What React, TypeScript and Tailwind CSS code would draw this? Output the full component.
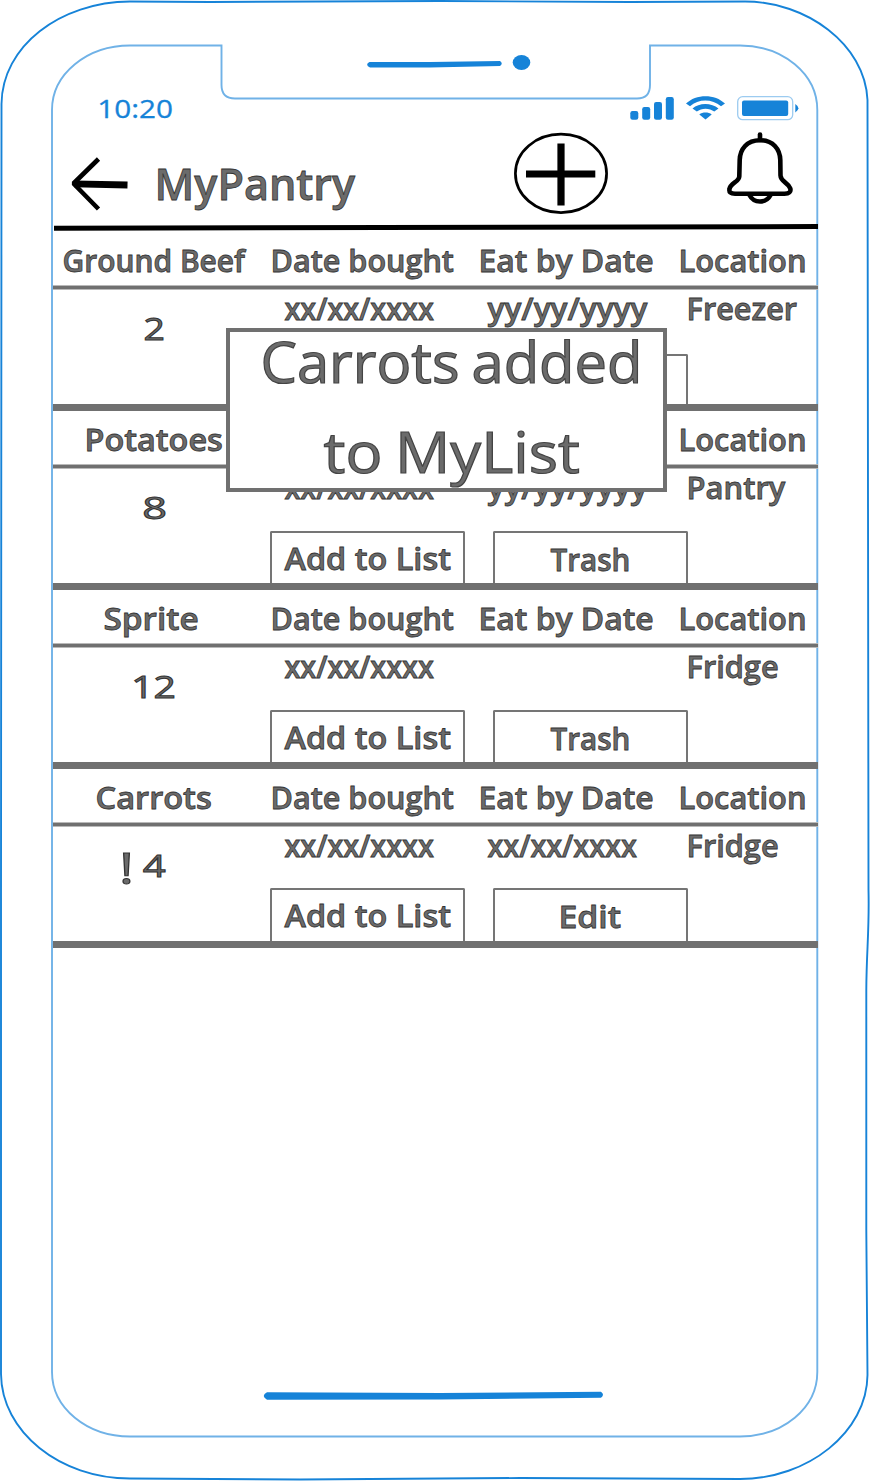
import { useLayoutEffect, useRef } from "react";

type InkTextProps = { text: string; width: number; className?: string };

/** Text whose visible glyphs are stretched to fill exactly the given width. */
function InkText({ text, width, className = "" }: InkTextProps) {
  const ref = useRef<HTMLSpanElement>(null);
  useLayoutEffect(() => {
    const el = ref.current;
    const ctx = document.createElement("canvas").getContext("2d");
    if (!el || !ctx) return;
    const cs = getComputedStyle(el);
    ctx.font = `${cs.fontWeight} ${cs.fontSize} ${cs.fontFamily}`;
    ctx.wordSpacing = cs.wordSpacing;
    const m = ctx.measureText(text);
    const ink = m.actualBoundingBoxLeft + m.actualBoundingBoxRight;
    el.style.transform = `scaleX(${(width - 1) / ink}) translateX(${m.actualBoundingBoxLeft + 0.5}px)`;
  }, [text, width]);
  return (
    <span className={`block whitespace-nowrap ${className}`} style={{ width }}>
      <span ref={ref} className="inline-block origin-left">
        {text}
      </span>
    </span>
  );
}

type Label = [string, number];
type Item = {
  name: Label;
  nameShift: string;
  qty: Label;
  alert?: boolean;
  bought: Label;
  eatBy?: Label;
  place: Label;
  action: Label;
  buttons: string;
};

const XDATE: Label = ["xx/xx/xxxx", 150];
const YDATE: Label = ["yy/yy/yyyy", 161];

const items: Item[] = [
  { name: ["Ground Beef", 184], nameShift: "pl-px", qty: ["2", 20], bought: XDATE, eatBy: YDATE, place: ["Freezer", 110], action: ["Trash", 79], buttons: "h-[50px]" },
  { name: ["Potatoes", 137], nameShift: "pl-px", qty: ["8", 23], bought: XDATE, eatBy: YDATE, place: ["Pantry", 98], action: ["Trash", 79], buttons: "h-[52px]" },
  { name: ["Sprite", 94], nameShift: "pr-[6px]", qty: ["12", 42], bought: XDATE, place: ["Fridge", 90], action: ["Trash", 79], buttons: "h-[52px]" },
  { name: ["Carrots", 116], nameShift: "", qty: ["4", 24], alert: true, bought: XDATE, eatBy: XDATE, place: ["Fridge", 90], action: ["Edit", 61], buttons: "h-[53px]" },
];

function CardButton({ label, width, className }: { label: string; width: number; className: string }) {
  return (
    <button
      className={`flex w-[195px] justify-center rounded-t-[2px] border-2 border-b-0 border-[#757575] ${className}`}
    >
      <InkText text={label} width={width} />
    </button>
  );
}

function PantryRow({ item }: { item: Item }) {
  return (
    <section className="h-[179px] border-b-[7px] border-[#707070]">
      <div className="grid h-[53px] grid-cols-[219px_208px_200px_137px] pt-px leading-[53px]">
        <div className={`flex w-[202px] justify-center ${item.nameShift}`}>
          <InkText text={item.name[0]} width={item.name[1]} />
        </div>
        <InkText text="Date bought" width={182} />
        <InkText text="Eat by Date" width={173} />
        <InkText text="Location" width={125} />
      </div>
      <div className="h-[5px] border-y border-[#b9b9b9] bg-[#707070]" />
      <div className="flex h-[114px]">
        <div className="flex w-[217px] items-start pt-3 leading-[52px]">
          <div className="flex w-[202px] justify-center font-medium [-webkit-text-stroke:1px_#333]">
            {item.alert && (
              <InkText text="!" width={9} className="-ml-[20px] mr-[11px] pt-0.5 text-[44px]" />
            )}
            <InkText text={item.qty[0]} width={item.qty[1]} />
          </div>
        </div>
        <div className="flex flex-1 flex-col justify-between">
          <div className="flex h-10 pl-[14px] leading-[35px]">
            <div className="w-[203px]">
              <InkText text={item.bought[0]} width={item.bought[1]} />
            </div>
            <div className="w-[201px]">
              {item.eatBy && <InkText text={item.eatBy[0]} width={item.eatBy[1]} />}
            </div>
            <InkText text={item.place[0]} width={item.place[1]} />
          </div>
          <div className="flex items-end gap-7">
            <CardButton label="Add to List" width={167} className={`pr-[5px] leading-[49px] ${item.buttons}`} />
            <CardButton label={item.action[0]} width={item.action[1]} className={`pr-[2px] leading-[51px] ${item.buttons}`} />
          </div>
        </div>
      </div>
    </section>
  );
}

function PhoneFrame() {
  return (
    <svg className="pointer-events-none absolute inset-0" width="870" height="1481" viewBox="0 0 870 1481" fill="none">
      <path
        d="M1 898V1374C1.500 1432 60 1478.500 130 1478.500L300 1479.500L520 1478L740 1479C808 1479 867 1432 867.500 1375L866.300 1230V990C866.500 950 869.500 930 868.500 890L867.500 100C865 44 806 1.500 745 1.500L630 2L440 1L210 2L130 1.500C60 2 2 46 1.500 104Z"
        stroke="#1683d8"
        strokeWidth="1.900"
      />
      <path
        d="M221.500 45.500H130C87 45.500 52 74 52 110V1372C52 1408 87 1436.500 130 1436.500H740C783 1436.500 817.300 1408 817.300 1372V110C817.300 74 783 45.500 740 45.500H650V85Q650 98.500 637 98.500H235Q221.500 98.500 221.500 85V44.500"
        stroke="#70b2e7"
        strokeWidth="1.900"
      />
      <path d="M369.500 61.900L430 62L500 61Q503.500 63.500 500 66L430 67.500L370 67.500Q364.500 64.500 369.500 61.900Z" fill="#1683d8" />
      <ellipse cx="521.500" cy="62.500" rx="8.800" ry="7.500" fill="#1683d8" />
      <path d="M267 1392.300L440 1393L601 1391.700Q605 1394.800 601 1397.800L440 1399.500L267 1399.700Q260.500 1396 267 1392.300Z" fill="#1683d8" />
    </svg>
  );
}

function StatusIcons() {
  return (
    <svg width="170" height="26" viewBox="630 95 170 26" fill="#1683d8">
      <rect x="630.300" y="111" width="8" height="8.700" rx="2.200" />
      <rect x="642.200" y="107" width="8" height="12.700" rx="2.200" />
      <rect x="654" y="102" width="8" height="17.700" rx="2.200" />
      <rect x="665.800" y="97" width="8" height="22.700" rx="2.200" />
      <path d="M686 103.500C696 93.700 715 93.700 725 103.500L721 106.300C712 98.500 698.500 98.500 690 106.300Z" />
      <path d="M692.500 108.500C699 102.500 711.500 102.500 718.500 108.500L714.300 111.600C709.500 107.700 701.500 107.700 696.800 111.600Z" />
      <path d="M699.300 114.400C702.500 111.900 708.500 111.900 711.700 114.400L705.500 119.500Z" />
      <rect x="737.700" y="96.700" width="55" height="23" rx="5" fill="none" stroke="#9ccbf0" strokeWidth="1.300" />
      <rect x="742" y="100.500" width="46.200" height="15.600" rx="2" />
      <path d="M795.300 104Q801.500 108.200 795.300 112.500Z" />
    </svg>
  );
}

function BackArrow() {
  return (
    <svg width="60" height="56" viewBox="70 156 60 56" fill="none" stroke="#000">
      <path d="M74 183.800L127.500 185" strokeWidth="6.800" />
      <path d="M98.500 159L73.500 183.500L98.500 209" strokeWidth="4.600" strokeLinejoin="bevel" />
    </svg>
  );
}

function AddIcon() {
  return (
    <svg width="96" height="84" viewBox="513 132 96 84" fill="none" stroke="#000">
      <ellipse cx="561" cy="173.400" rx="45.600" ry="39.200" strokeWidth="2.700" />
      <path d="M561 143.500V205.500M526 174H595.300" strokeWidth="7.200" />
    </svg>
  );
}

function BellIcon() {
  return (
    <svg width="70" height="76" viewBox="725 130 70 76" fill="none" stroke="#000" strokeLinecap="round" strokeLinejoin="round">
      <path d="M760 134.500V140" strokeWidth="4.600" />
      <path
        d="M760 140.200C747 140.200 740 149 739.700 160L739.300 176C739.500 182 730.500 182.500 729.500 189Q728.500 193.700 735 193.700H784.500Q791.500 193.700 790.300 188.500C788 182 780.700 182 780.500 175.500L780.300 160C780 149 773 140.200 760 140.200Z"
        strokeWidth="4.600"
      />
      <path d="M749 194.500C754 203.900 766 203.900 771 194.500" strokeWidth="4.400" />
    </svg>
  );
}

export default function App() {
  return (
    <div className="relative h-[1481px] w-[870px] overflow-hidden bg-white font-['Open_Sans',sans-serif] text-[31.5px] font-semibold text-[#6b6b6b] [-webkit-text-stroke:0.8px_#333]">
      <PhoneFrame />
      <main className="relative ml-[53px] w-[765px] pt-[95px]">
        <div className="flex h-[35px] items-start justify-between pl-[46px] pr-[18px]">
          <InkText
            text="10:20"
            width={74}
            className="text-[25px] font-normal leading-[27px] text-[#1683d8] [-webkit-text-stroke:0.3px_#1683d8]"
          />
          <StatusIcons />
        </div>
        <header className="flex h-[102px] items-start">
          <div className="ml-[17px] pt-[26px]">
            <BackArrow />
          </div>
          <InkText text="MyPantry" width={198} className="ml-[28px] mt-[23px] text-[44px] leading-[60px]" />
          <div className="ml-[157px] pt-[2px]">
            <AddIcon />
          </div>
          <div className="ml-[116px]">
            <BellIcon />
          </div>
        </header>
        <svg className="-mt-[8px] block" width="765" height="8" viewBox="0 0 765 8">
          <path d="M1 1.800L765 0V5L1 6.800Z" fill="#000" />
        </svg>
        {items.map((item) => (
          <PantryRow key={item.name[0]} item={item} />
        ))}
      </main>
      <div
        role="status"
        className="absolute left-[226px] top-[328px] h-[164px] w-[441px] border-4 border-[#707070] bg-white text-[57px] font-medium leading-[90px] [word-spacing:-3px] [-webkit-text-stroke:1.2px_#444]"
      >
        <div className="-mt-[16px] flex flex-col">
          <InkText text="Carrots added" width={375} className="ml-[33px]" />
          <InkText text="to MyList" width={257} className="ml-[93px]" />
        </div>
      </div>
    </div>
  );
}
